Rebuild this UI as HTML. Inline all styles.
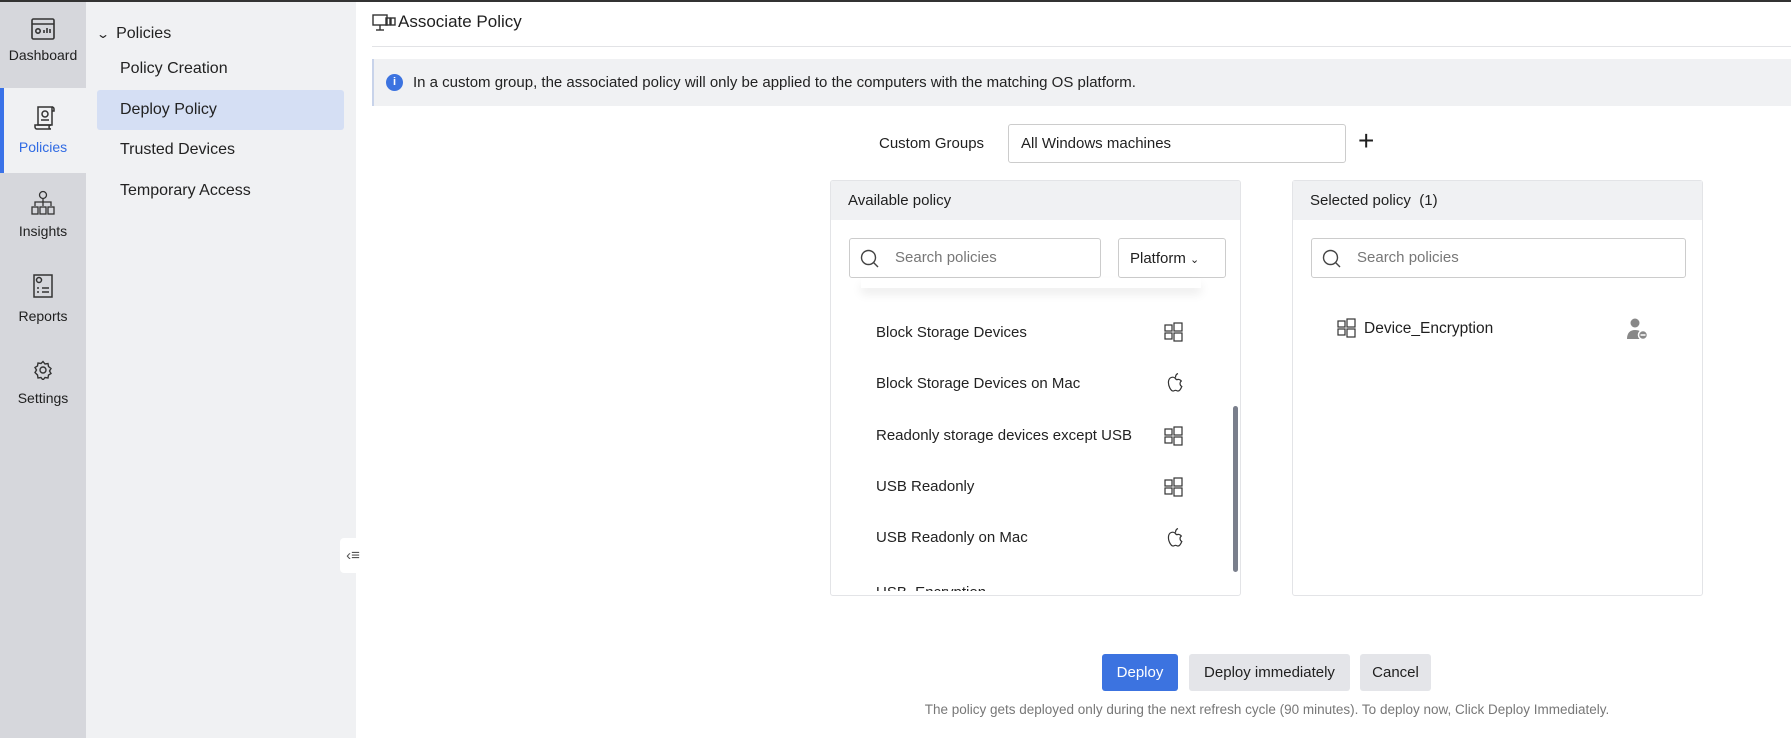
<!DOCTYPE html>
<html><head><meta charset="utf-8"><style>
*{box-sizing:border-box;margin:0;padding:0}
body{width:1791px;height:736px;overflow:hidden;background:#fff;font-family:"Liberation Sans",sans-serif;color:#1f1f1f;position:relative;border-top:2px solid #333}
.a{position:absolute}
.rail{left:0;top:0;width:86px;height:736px;background:#d6d7dc}
.ri{position:absolute;left:0;width:86px;height:85px;text-align:center;font-size:14px}
.ri svg{display:block;margin:0 auto}
.side{left:86px;top:0;width:270px;height:736px;background:#f0f1f3}
.si{position:absolute;left:34px;font-size:16px;color:#222}
.li{position:absolute;left:45px;font-size:15px;color:#222}
</style></head><body>
<div class="a rail">
 <div class="ri" style="top:0;background:#d6d7dc"><svg style="margin-top:16px" width="24" height="22" viewBox="0 0 24 22" fill="none" stroke="#333" stroke-width="1.6"><rect x="1" y="1" width="22" height="20" rx="1.5"/><line x1="1" y1="6" x2="23" y2="6"/><circle cx="7" cy="13" r="2.2"/><line x1="13" y1="15" x2="13" y2="12"/><line x1="16" y1="15" x2="16" y2="10"/><line x1="19" y1="15" x2="19" y2="11"/></svg><div style="margin-top:7px">Dashboard</div></div>
 <div class="ri" style="top:86px;height:85px;background:#f0f1f3;border-left:4px solid #3a72e8"><svg style="margin-top:17px" width="24" height="26" viewBox="0 0 24 26" fill="none" stroke="#333" stroke-width="1.5"><path d="M5 2h14v18H5z"/><path d="M19 2a2 2 0 0 1 2 2v2h-2"/><circle cx="12" cy="9" r="3"/><line x1="8" y1="15" x2="16" y2="15"/><path d="M2 20h16a2 2 0 0 0 0 4H4a2 2 0 0 1-2-2z"/></svg><div style="margin-top:8px;color:#2f6ae3;margin-left:-4px">Policies</div></div>
 <div class="ri" style="top:171px"><svg style="margin-top:17px" width="26" height="26" viewBox="0 0 26 26" fill="none" stroke="#333" stroke-width="1.3"><circle cx="13" cy="5" r="3.5"/><line x1="13" y1="9" x2="13" y2="16"/><path d="M5 16V12h16v4"/><rect x="2" y="17" width="6" height="7"/><rect x="10" y="17" width="6" height="7"/><rect x="18" y="17" width="6" height="7"/></svg><div style="margin-top:7px">Insights</div></div>
 <div class="ri" style="top:257px"><svg style="margin-top:15px" width="20" height="24" viewBox="0 0 20 24" fill="none" stroke="#333" stroke-width="1.5"><rect x="1" y="1" width="18" height="22"/><circle cx="6" cy="6" r="2.5"/><line x1="9" y1="14" x2="16" y2="14"/><line x1="9" y1="18" x2="16" y2="18"/><line x1="4" y1="14" x2="6" y2="14"/><line x1="4" y1="18" x2="6" y2="18"/></svg><div style="margin-top:10px">Reports</div></div>
 <div class="ri" style="top:343px"><svg style="margin-top:15px" width="20" height="20" viewBox="0 0 20 20" fill="none" stroke="#333" stroke-width="1.4"><circle cx="10" cy="10" r="3"/><path d="M10 1.5l2 2.5 3-.5.5 3 2.5 2-1.5 2.5 1.5 2.5-2.5 1.5-.5 3-3-.5-2 2.5-2-2.5-3 .5-.5-3L2 12.5 3.5 10 2 7.5 4.5 6l.5-3 3 .5z"/></svg><div style="margin-top:10px">Settings</div></div>
</div>
<div class="a side">
 <div class="si" style="top:23px;left:12px;font-size:16px"><span style="font-size:12px;display:inline-block;transform:scaleX(1.4);margin-right:8px">&#8964;</span>Policies</div>
 <div class="si" style="top:58px">Policy Creation</div>
 <div style="position:absolute;left:11px;top:88px;width:247px;height:40px;background:#d5dff4;border-radius:3px"></div>
 <div class="si" style="top:99px">Deploy Policy</div>
 <div class="si" style="top:139px">Trusted Devices</div>
 <div class="si" style="top:180px">Temporary Access</div>
 <div style="position:absolute;left:254px;top:536px;width:26px;height:35px;background:#fff;border-radius:4px 0 0 4px;font-size:15px;color:#555;text-align:center;line-height:35px">&lsaquo;&#8801;</div>
</div>
<svg class="a" style="left:372px;top:11px" width="24" height="20" viewBox="0 0 24 20" fill="none" stroke="#333" stroke-width="1.4"><rect x="1" y="2" width="14" height="10"/><line x1="8" y1="12" x2="8" y2="17"/><line x1="4" y1="17" x2="12" y2="17"/><rect x="14" y="5" width="4" height="7"/><rect x="19" y="5" width="4" height="7"/></svg>
<div class="a" style="left:398px;top:10px;font-size:17px">Associate Policy</div>
<div class="a" style="left:372px;top:44px;width:1419px;height:1px;background:#e2e3e6"></div>
<div class="a" style="left:372px;top:57px;width:1419px;height:47px;background:#f0f1f3;border-left:2px solid #c8d3ea"></div>
<div class="a" style="left:386px;top:72px;width:17px;height:17px;border-radius:50%;background:#3c73e0;color:#fff;font-size:11px;font-weight:bold;text-align:center;line-height:17px">i</div>
<div class="a" style="left:413px;top:72px;font-size:15px;color:#222">In a custom group, the associated policy will only be applied to the computers with the matching OS platform.</div>
<div class="a" style="left:879px;top:133px;font-size:15px">Custom Groups</div>
<div class="a" style="left:1008px;top:122px;width:338px;height:39px;border:1px solid #ccc;border-radius:3px;font-size:15px;padding:10px 12px">All Windows machines</div>
<div class="a" style="left:1358px;top:124px;font-size:28px;line-height:30px;font-weight:300">+</div>

<div class="a" style="left:830px;top:178px;width:411px;height:416px;border:1px solid #e3e4e7;border-radius:3px;overflow:hidden">
 <div style="height:39px;background:#f0f1f3;font-size:15px;padding:11px 17px">Available policy</div>
 <div class="a" style="left:0;top:100px;width:409px;height:310px;overflow:hidden">
  <div class="li" style="top:-13px">Block Storage Devices on Windows</div>
  <div class="li" style="top:43px">Block Storage Devices</div>
  <div class="li" style="top:94px">Block Storage Devices on Mac</div>
  <div class="li" style="top:146px">Readonly storage devices except USB</div>
  <div class="li" style="top:197px">USB Readonly</div>
  <div class="li" style="top:248px">USB Readonly on Mac</div>
  <div class="li" style="top:303px">USB_Encryption</div>
 </div>
 <div class="a" style="left:0;top:39px;width:409px;height:68px;background:#fff"></div>
 <div class="a" style="left:18px;top:57px;width:252px;height:40px;border:1px solid #ccc;border-radius:3px;font-size:15px;color:#777;padding:10px 0 0 45px">Search policies<svg style="position:absolute;left:10px;top:10px" width="20" height="20" viewBox="0 0 20 20" fill="none" stroke="#444" stroke-width="1.4"><circle cx="8.5" cy="8.5" r="7"/><line x1="13.5" y1="13.5" x2="18" y2="18"/></svg></div>
 <div class="a" style="left:287px;top:57px;width:108px;height:40px;border:1px solid #ccc;border-radius:3px;font-size:15px;padding:11px 11px">Platform <span style="font-size:11px">&#8964;</span></div>
 <div class="a" style="left:30px;top:97px;width:340px;height:10px;box-shadow:0 6px 10px rgba(0,0,0,.08)"></div>
 <div class="a" style="left:402px;top:225px;width:5px;height:166px;border-radius:3px;background:#7a7f8c"></div>
</div>
<div class="a" style="left:1292px;top:178px;width:411px;height:416px;border:1px solid #e3e4e7;border-radius:3px">
 <div style="height:39px;background:#f0f1f3;font-size:15px;padding:11px 17px">Selected policy &nbsp;(1)</div>
 <div class="a" style="left:18px;top:57px;width:375px;height:40px;border:1px solid #ccc;border-radius:3px;font-size:15px;color:#777;padding:10px 0 0 45px">Search policies<svg style="position:absolute;left:10px;top:10px" width="20" height="20" viewBox="0 0 20 20" fill="none" stroke="#444" stroke-width="1.4"><circle cx="8.5" cy="8.5" r="7"/><line x1="13.5" y1="13.5" x2="18" y2="18"/></svg></div>
 <div class="a" style="left:71px;top:139px;font-size:15.5px">Device_Encryption</div>
 <svg class="a" style="left:333px;top:136px" width="24" height="24" viewBox="0 0 24 24"><circle cx="9" cy="6" r="4.5" fill="#888"/><path d="M1 22c0-6 3-9 8-9s6 2 7 4v5z" fill="#888"/><circle cx="17" cy="18" r="4.5" fill="#888" stroke="#fff" stroke-width="1.5"/><line x1="14.5" y1="18" x2="19.5" y2="18" stroke="#fff" stroke-width="1.5"/></svg>
</div>
<svg width="0" height="0" style="position:absolute"><defs>
<g id="w" fill="none" stroke="#333" stroke-width="1.2"><rect x="1" y="3" width="7" height="6"/><rect x="10" y="1" width="8" height="8"/><rect x="1" y="11" width="7" height="6"/><rect x="10" y="11" width="8" height="8"/></g>
<g id="m" fill="none" stroke="#333" stroke-width="1.2"><path d="M9 5c-2-1.5-6-1-6.5 3.5C2 13 5 18 7 18c1.2 0 1.5-.7 2.5-.7s1.3.7 2.5.7c1.5 0 3-2.5 3.8-4.5-2-1-2.5-4-.5-5.5-1-1.5-3-2-4.3-1.3C10.5 6.7 10 6.5 9 5z"/><path d="M9.5 4.5c0-2 1-3.5 2.5-4"/></g>
</defs></svg>
<svg class="a" style="left:1164px;top:320px" width="20" height="20"><use href="#w"/></svg>
<svg class="a" style="left:1166px;top:371px" width="20" height="20"><use href="#m"/></svg>
<svg class="a" style="left:1164px;top:424px" width="20" height="20"><use href="#w"/></svg>
<svg class="a" style="left:1164px;top:475px" width="20" height="20"><use href="#w"/></svg>
<svg class="a" style="left:1166px;top:526px" width="20" height="20"><use href="#m"/></svg>
<svg class="a" style="left:1337px;top:316px" width="20" height="20"><use href="#w"/></svg>
<div class="a" style="left:1102px;top:652px;width:76px;height:37px;background:#3c73e0;color:#fff;border-radius:3px;font-size:15px;text-align:center;line-height:37px">Deploy</div>
<div class="a" style="left:1189px;top:652px;width:161px;height:37px;background:#e4e5e9;border-radius:3px;font-size:15px;text-align:center;line-height:37px">Deploy immediately</div>
<div class="a" style="left:1360px;top:652px;width:71px;height:37px;background:#e4e5e9;border-radius:3px;font-size:15px;text-align:center;line-height:37px">Cancel</div>
<div class="a" style="left:906px;top:700px;width:722px;font-size:13.5px;color:#777;text-align:center;white-space:nowrap">The policy gets deployed only during the next refresh cycle (90 minutes). To deploy now, Click Deploy Immediately.</div>
</body></html>
